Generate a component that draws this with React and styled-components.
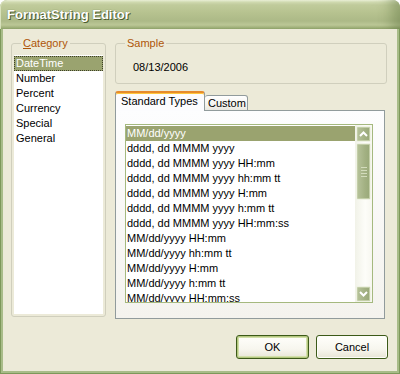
import React from 'react'
import styled, { createGlobalStyle } from 'styled-components'

const GlobalStyle = createGlobalStyle`
  html, body { margin: 0; padding: 0; background: #ffffff; }
  body {
    width: 400px;
    height: 374px;
    overflow: hidden;
    font-family: "Liberation Sans", Arial, sans-serif;
    font-size: 11px;
    color: #000;
  }
  * { box-sizing: border-box; }
`

const categories = ['DateTime', 'Number', 'Percent', 'Currency', 'Special', 'General']

const formats = [
  'MM/dd/yyyy',
  'dddd, dd MMMM yyyy',
  'dddd, dd MMMM yyyy HH:mm',
  'dddd, dd MMMM yyyy hh:mm tt',
  'dddd, dd MMMM yyyy H:mm',
  'dddd, dd MMMM yyyy h:mm tt',
  'dddd, dd MMMM yyyy HH:mm:ss',
  'MM/dd/yyyy HH:mm',
  'MM/dd/yyyy hh:mm tt',
  'MM/dd/yyyy H:mm',
  'MM/dd/yyyy h:mm tt',
  'MM/dd/yyyy HH:mm:ss',
]

const Window = styled.div`
  width: 400px;
  height: 374px;
  display: flex;
  flex-direction: column;
  background: #7d985a;
  border-radius: 8px 8px 0 0;
`

const TitleBar = styled.div`
  height: 29px;
  flex: none;
  display: flex;
  align-items: center;
  padding: 0 0 1px 7px;
  border-radius: 7px 7px 0 0;
  background: linear-gradient(
    to bottom,
    #eef3da 0px,
    #d3dcb3 2px,
    #c0cb9b 5px,
    #b6c28f 13px,
    #acb987 21px,
    #bcc897 25px,
    #a7b681 27px,
    #8ea36a 29px
  );
  box-shadow: inset -18px 0 14px -10px rgba(90, 112, 60, 0.45),
    inset 1px 0 0 #d9e2bd;
`

const Title = styled.span`
  font-family: "Liberation Sans", Arial, sans-serif;
  font-weight: bold;
  font-size: 13px;
  color: #ffffff;
  text-shadow: 1px 1px 0 #4c5c30, 0 0 1px #5d6d3c;
`

const Frame = styled.div`
  flex: 1;
  display: flex;
  flex-direction: column;
  margin: 0 1px 1px;
  border: 2px solid #a8bc88;
  border-top: 0;
  background: #ecead8;
  padding: 8px 10px 12px 8px;
`

const Main = styled.div`
  flex: 1;
  display: flex;
  gap: 9px;
  min-height: 0;
`

const Group = styled.fieldset`
  margin: 0;
  min-width: 0;
  border: 1px solid #d0cfbd;
  border-radius: 3px;
  display: flex;
  flex-direction: column;
`

const CategoryGroup = styled(Group)`
  width: 95px;
  flex: none;
  padding: 5px 2px 2px;
  margin-bottom: 2px;
`

const SampleGroup = styled(Group)`
  padding: 11px 2px 9px;
`

const Legend = styled.legend`
  margin-left: 7px;
  padding: 0 2px;
  line-height: 13px;
  font-size: 11px;
  color: #ae5608;
`

const Key = styled.span`
  text-decoration: underline;
`

const SampleText = styled.div`
  line-height: 13px;
  padding-left: 15px;
`

const CategoryList = styled.div`
  flex: 1;
  padding-top: 1px;
  background: #ffffff;
`

const Row = styled.div`
  height: 15px;
  line-height: 15px;
  padding-left: ${(p) => p.$indent}px;
  white-space: nowrap;
  overflow: hidden;
  background: ${(p) => (p.$selected ? '#9aa36f' : 'transparent')};
  color: ${(p) => (p.$selected ? '#ffffff' : '#000000')};
  outline: ${(p) => (p.$focus ? '1px dotted #3d3f28' : 'none')};
  outline-offset: -1px;
`

const RightColumn = styled.div`
  flex: 1;
  display: flex;
  flex-direction: column;
  min-width: 0;
`

const TabStrip = styled.div`
  display: flex;
  align-items: flex-end;
  margin-top: 7px;
  height: 20px;
  margin-bottom: -1px;
  position: relative;
  z-index: 1;
`

const Tab = styled.div`
  height: ${(p) => (p.$active ? 20 : 16)}px;
  width: ${(p) => p.$w}px;
  padding-left: ${(p) => (p.$active ? 5 : 3)}px;
  line-height: ${(p) => (p.$active ? 16 : 15)}px;
  border: 1px solid #919b9c;
  border-bottom: ${(p) => (p.$active ? '0' : '1px solid #919b9c')};
  border-top: ${(p) => (p.$active ? '2px solid #e68b2c' : '1px solid #919b9c')};
  border-left: ${(p) => (p.$active ? '1px solid #919b9c' : '0')};
  border-radius: 3px 3px 0 0;
  background: ${(p) =>
    p.$active ? '#fcfcfe' : 'linear-gradient(to bottom, #ffffff, #f3f2ec 70%, #e9e8e0)'};
  box-shadow: ${(p) => (p.$active ? 'inset 0 1px 0 #ffc73c' : 'none')};
  white-space: nowrap;
`

const Panel = styled.div`
  flex: 1;
  margin-right: 2px;
  border: 1px solid #919b9c;
  background: linear-gradient(to bottom, #fdfdfe, #f4f3ee);
  padding: 13px 11px 0 9px;
`

const FormatList = styled.div`
  height: 179px;
  display: flex;
  border: 1px solid #a5b97f;
  background: #ffffff;
`

const Items = styled.div`
  flex: 1;
  padding-top: 1px;
  overflow: hidden;
`

const ScrollBar = styled.div`
  width: 17px;
  flex: none;
  display: flex;
  flex-direction: column;
  padding: 1px 1px 0 1px;
  background: linear-gradient(to right, #f1f2e8, #fdfdf9 60%, #f7f7f0);
`

const ScrollButton = styled.div`
  height: 16px;
  flex: none;
  display: flex;
  align-items: center;
  justify-content: center;
  border: 1px solid #eff2e4;
  border-radius: 2px;
  background: linear-gradient(to right, #b7c39b, #a3b183 60%, #98a878);
  box-shadow: inset 0 0 0 1px #c3cea8;
`

const Thumb = styled(ScrollButton)`
  height: 57px;
  margin-top: 1px;
  flex-direction: column;
  gap: 2px;
`

const Grip = styled.div`
  width: 6px;
  height: 1px;
  background: #d3dcbc;
`

const Track = styled.div`
  flex: 1;
`

const Buttons = styled.div`
  display: flex;
  justify-content: flex-end;
  gap: 7px;
  margin-top: 16px;
  margin-right: -1px;
`

const Button = styled.div`
  width: ${(p) => p.$w}px;
  height: 24px;
  display: flex;
  align-items: center;
  justify-content: center;
  border: 1px solid #3c5a18;
  border-radius: 3px;
  background: linear-gradient(to bottom, #fffffb, #f7f6ee 60%, #e7e5d5);
  box-shadow: ${(p) =>
    p.$default
      ? 'inset 0 0 0 1px #b3c77e, inset 0 0 0 2px #d2dfaa'
      : 'inset 0 0 0 1px #fdfdf8'};
`

const Arrow = ({ up }) => (
  <svg width="9" height="6" viewBox="0 0 9 6">
    <polyline
      points={up ? '1,5 4.5,1.5 8,5' : '1,1 4.5,4.5 8,1'}
      fill="none"
      stroke="#ffffff"
      strokeWidth="2"
    />
  </svg>
)

export default function App() {
  return (
    <>
      <GlobalStyle />
      <Window>
        <TitleBar>
          <Title>FormatString Editor</Title>
        </TitleBar>
        <Frame>
          <Main>
            <CategoryGroup>
              <Legend>
                <Key>C</Key>ategory
              </Legend>
              <CategoryList>
                {categories.map((c, i) => (
                  <Row key={c} $indent={2} $selected={i === 0} $focus={i === 0}>
                    {c}
                  </Row>
                ))}
              </CategoryList>
            </CategoryGroup>
            <RightColumn>
              <SampleGroup>
                <Legend>Sample</Legend>
                <SampleText>08/13/2006</SampleText>
              </SampleGroup>
              <TabStrip>
                <Tab $active $w={90}>Standard Types</Tab>
                <Tab $w={43}>Custom</Tab>
              </TabStrip>
              <Panel>
                <FormatList>
                  <Items>
                    {formats.map((f, i) => (
                      <Row key={f} $indent={1} $selected={i === 0}>
                        {f}
                      </Row>
                    ))}
                  </Items>
                  <ScrollBar>
                    <ScrollButton>
                      <Arrow up />
                    </ScrollButton>
                    <Thumb>
                      <Grip />
                      <Grip />
                      <Grip />
                      <Grip />
                    </Thumb>
                    <Track />
                    <ScrollButton>
                      <Arrow />
                    </ScrollButton>
                  </ScrollBar>
                </FormatList>
              </Panel>
            </RightColumn>
          </Main>
          <Buttons>
            <Button $default $w={73}>OK</Button>
            <Button $w={72}>Cancel</Button>
          </Buttons>
        </Frame>
      </Window>
    </>
  )
}
